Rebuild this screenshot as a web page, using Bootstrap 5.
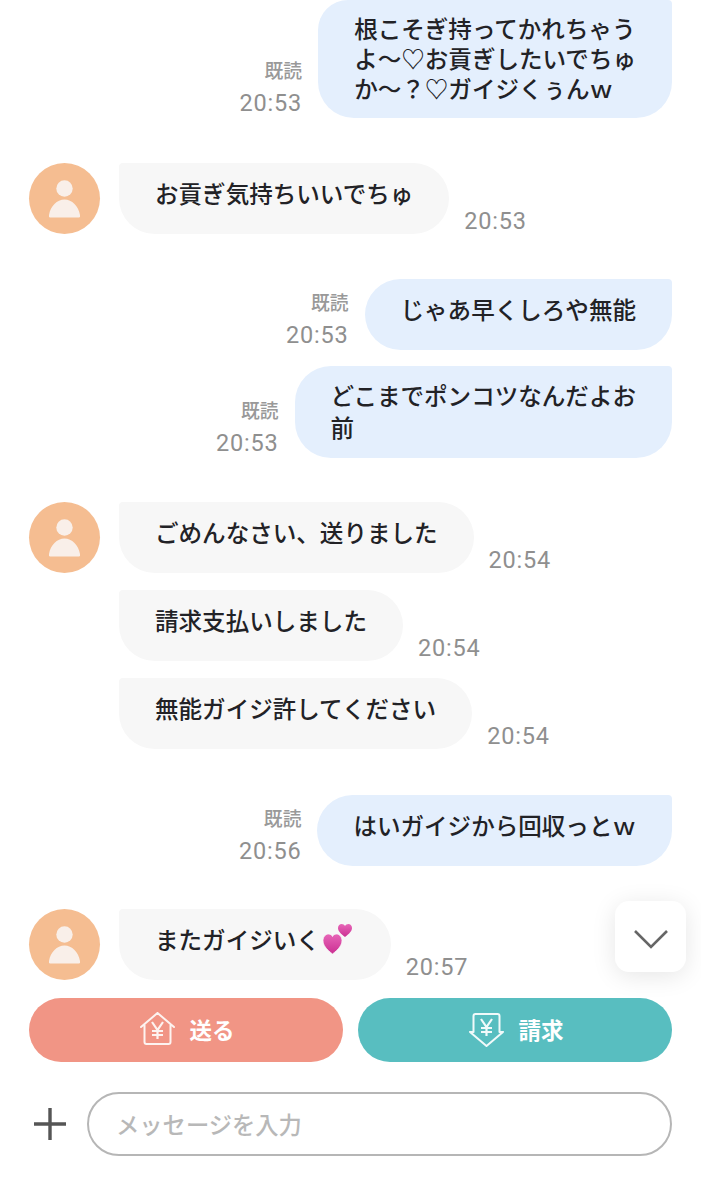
<!DOCTYPE html>
<html lang="ja">
  <head>
    <meta charset="UTF-8" />
    <meta name="viewport" content="width=device-width, initial-scale=1.0" />
    <title>Chat</title>
    <link
      href="https://cdn.jsdelivr.net/npm/bootstrap@5.3.0/dist/css/bootstrap.min.css"
      rel="stylesheet"
    />
    <style>
      body {
        background-color: #fff;
        color: #222226;
        font-family: "Noto Sans CJK JP", "Noto Sans", sans-serif;
        overflow: hidden;
      }
      .chat-page {
        width: 701px;
        height: 1199px;
        position: relative;
        padding: 0 29px;
      }
      .chat-log {
        height: 980px;
      }
      .gap-group {
        margin-top: 45px;
      }
      .gap-group-sm {
        margin-top: 44px;
      }
      .gap-group-md {
        margin-top: 43px;
      }
      .gap-group-lg {
        margin-top: 46px;
      }
      .gap-row {
        margin-top: 17px;
      }
      .gap-row-sm {
        margin-top: 16px;
      }
      .avatar {
        width: 71px;
        height: 71px;
        flex: none;
        align-self: flex-start;
        border-radius: 50%;
        background-color: #f5bd91;
      }
      .bubble {
        font-size: 23.55px;
        font-weight: 500;
        line-height: 31px;
        padding: 15px 36px 25px;
        border-radius: 36px;
        white-space: nowrap;
      }
      .bubble-in {
        background-color: #f7f7f7;
        border-top-left-radius: 4px;
        margin-left: 19px;
      }
      .bubble-out {
        background-color: #e4effd;
        border-top-right-radius: 4px;
      }
      .bubble-multi {
        line-height: 32px;
        padding-top: 13px;
        padding-bottom: 15px;
      }
      .bubble-first {
        line-height: 30px;
        padding-top: 13px;
        padding-bottom: 15px;
        border-top-left-radius: 30px;
      }
      .meta-out {
        margin-right: 16px;
        text-align: right;
      }
      .read-mark {
        font-size: 18.8px;
        font-weight: 500;
        line-height: 26px;
        color: #999;
        margin-bottom: 7px;
      }
      .time-text {
        font-family: "Roboto", "Noto Sans CJK JP", sans-serif;
        font-size: 23.5px;
        letter-spacing: 0.8px;
        line-height: 26px;
        color: #8f8f8f;
        margin-bottom: 2px;
      }
      .time-in.time-text {
        margin-left: 15px;
        margin-bottom: 0;
      }
      .heart-icon {
        width: 30px;
        height: 31px;
        margin: -12px 2px -6px 3px;
      }
      .scroll-btn {
        position: absolute;
        left: 615px;
        top: 901px;
        width: 71px;
        height: 71px;
        border-radius: 14px;
        background-color: #fff;
        box-shadow: 0 4px 24px rgba(0, 0, 0, 0.1);
        border: 0;
      }
      .action-btn {
        flex: 1 1 0;
        height: 64px;
        border-radius: 32px;
        border: 0;
        padding: 0 0 0 3px;
        color: #fff;
        font-size: 22.5px;
        font-weight: 700;
        gap: 14px;
      }
      .action-send {
        background-color: #f19585;
      }
      .action-request {
        background-color: #58bec0;
      }
      .house-icon {
        margin-top: -3px;
      }
      .action-row {
        margin-top: 18px;
        gap: 15px;
      }
      .input-row {
        margin-top: 30px;
      }
      .plus-btn {
        width: 58px;
        flex: none;
        border: 0;
        background: none;
        padding: 0 0 0 5px;
        text-align: left;
      }
      .message-input.form-control {
        height: 64px;
        border: 2px solid #b6b6b6;
        border-radius: 32px;
        padding: 0 27px;
        font-size: 23.3px;
        font-weight: 500;
        color: #222226;
      }
      .message-input::placeholder {
        color: #b8b8b8;
      }
    </style>
  </head>
  <body>
    <div class="chat-page">
      <div class="chat-log">
        <!-- First message runs up to the top edge -->
        <div class="d-flex justify-content-end align-items-end">
          <div class="meta-out">
            <div class="read-mark">既読</div>
            <div class="time-text">20:53</div>
          </div>
          <div class="bubble bubble-out bubble-first">
            根こそぎ持ってかれちゃう<br />よ〜♡お貢ぎしたいでちゅ<br />か〜？♡ガイジくぅんｗ
          </div>
        </div>

        <div class="d-flex align-items-end gap-group">
          <svg class="avatar" viewBox="0 0 71 71">
            <circle cx="35.5" cy="25.5" r="8.2" fill="#f9efe9" />
            <path d="M21 54.5 Q19.5 54.5 20 52 C21.5 43 28 36.5 35.5 36.5 C43 36.5 49.5 43 51 52 Q51.5 54.5 50 54.5 Z" fill="#f9efe9" />
          </svg>
          <div class="bubble bubble-in">お貢ぎ気持ちいいでちゅ</div>
          <div class="time-text time-in">20:53</div>
        </div>

        <div class="d-flex justify-content-end align-items-end gap-group">
          <div class="meta-out">
            <div class="read-mark">既読</div>
            <div class="time-text">20:53</div>
          </div>
          <div class="bubble bubble-out">じゃあ早くしろや無能</div>
        </div>
        <div class="d-flex justify-content-end align-items-end gap-row-sm">
          <div class="meta-out">
            <div class="read-mark">既読</div>
            <div class="time-text">20:53</div>
          </div>
          <div class="bubble bubble-out bubble-multi">どこまでポンコツなんだよお<br />前</div>
        </div>

        <div class="d-flex align-items-end gap-group-sm">
          <svg class="avatar" viewBox="0 0 71 71">
            <circle cx="35.5" cy="25.5" r="8.2" fill="#f9efe9" />
            <path d="M21 54.5 Q19.5 54.5 20 52 C21.5 43 28 36.5 35.5 36.5 C43 36.5 49.5 43 51 52 Q51.5 54.5 50 54.5 Z" fill="#f9efe9" />
          </svg>
          <div class="bubble bubble-in">ごめんなさい、送りました</div>
          <div class="time-text time-in">20:54</div>
        </div>
        <div class="d-flex align-items-end gap-row">
          <div class="avatar invisible"></div>
          <div class="bubble bubble-in">請求支払いしました</div>
          <div class="time-text time-in">20:54</div>
        </div>
        <div class="d-flex align-items-end gap-row">
          <div class="avatar invisible"></div>
          <div class="bubble bubble-in">無能ガイジ許してください</div>
          <div class="time-text time-in">20:54</div>
        </div>

        <div class="d-flex justify-content-end align-items-end gap-group-lg">
          <div class="meta-out">
            <div class="read-mark">既読</div>
            <div class="time-text">20:56</div>
          </div>
          <div class="bubble bubble-out">はいガイジから回収っとｗ</div>
        </div>

        <div class="d-flex align-items-end gap-group-md">
          <svg class="avatar" viewBox="0 0 71 71">
            <circle cx="35.5" cy="25.5" r="8.2" fill="#f9efe9" />
            <path d="M21 54.5 Q19.5 54.5 20 52 C21.5 43 28 36.5 35.5 36.5 C43 36.5 49.5 43 51 52 Q51.5 54.5 50 54.5 Z" fill="#f9efe9" />
          </svg>
          <div class="bubble bubble-in">
            またガイジいく<svg class="heart-icon" viewBox="0 0 30 31">
              <defs>
                <linearGradient id="heartFill" x1="0" y1="0" x2="0" y2="1">
                  <stop offset="0" stop-color="#e766b8" />
                  <stop offset="1" stop-color="#cb2f92" />
                </linearGradient>
              </defs>
              <path d="M22 13 C17.5 9.5 15 7 15 4 C15 1.5 17 0 18.5 0 C20 0 21.5 .7 22 2 C22.5 .7 24 0 25.5 0 C27 0 29 1.5 29 4 C29 7 26.5 9.5 22 13 Z" fill="url(#heartFill)" />
              <path d="M9.5 30 C3 25 0 21 0 16.5 C0 12.5 3 10 5.5 10 C7.5 10 9 11 9.5 12.5 C10 11 11.5 10 13.5 10 C16 10 19 12.5 19 16.5 C19 21 16 25 9.5 30 Z" fill="url(#heartFill)" stroke="#f7f7f7" stroke-width="0.8" />
            </svg>
          </div>
          <div class="time-text time-in">20:57</div>
        </div>
      </div>

      <button class="scroll-btn" type="button" aria-label="scroll down">
        <svg width="36" height="20" viewBox="0 0 36 20">
          <path d="M2 2 L18 18 L34 2" fill="none" stroke="#666" stroke-width="2.6" />
        </svg>
      </button>

      <div class="d-flex action-row">
        <button class="action-btn action-send d-flex align-items-center justify-content-center" type="button">
          <svg class="house-icon" width="35" height="33" viewBox="0 0 35 33" fill="none" stroke="#fdf3f0" stroke-width="2">
            <path d="M1 15 L17.5 1 L34 15 M4.5 13 V30 Q4.5 32 6.5 32 H28.5 Q30.5 32 30.5 30 V13" stroke-linejoin="round" stroke-linecap="round" />
            <path d="M12 10 L17.5 18 L23 10 M17.5 18 V27 M12 19 H23 M12 23 H23" stroke-width="2.2" />
          </svg>
          送る
        </button>
        <button class="action-btn action-request d-flex align-items-center justify-content-center" type="button">
          <svg width="35" height="34" viewBox="0 0 35 34" fill="none" stroke="#f1fafa" stroke-width="2">
            <path d="M4.5 19 V3 Q4.5 1 6.5 1 H28.5 Q30.5 1 30.5 3 V19 M1 19 L17.5 33 L34 19 M1 19 H4.5 M30.5 19 H34" stroke-linejoin="round" stroke-linecap="round" />
            <path d="M12 6 L17.5 14 L23 6 M17.5 14 V23 M12 15 H23 M12 19 H23" stroke-width="2.2" />
          </svg>
          請求
        </button>
      </div>

      <div class="d-flex align-items-center input-row">
        <button class="plus-btn" type="button" aria-label="add">
          <svg width="32" height="32" viewBox="0 0 32 32">
            <path d="M16 0 V32 M0 16 H32" stroke="#555" stroke-width="3.4" />
          </svg>
        </button>
        <input class="form-control message-input" type="text" placeholder="メッセージを入力" />
      </div>
    </div>

    <script src="https://cdn.jsdelivr.net/npm/bootstrap@5.3.0/dist/js/bootstrap.bundle.min.js"></script>
  </body>
</html>
